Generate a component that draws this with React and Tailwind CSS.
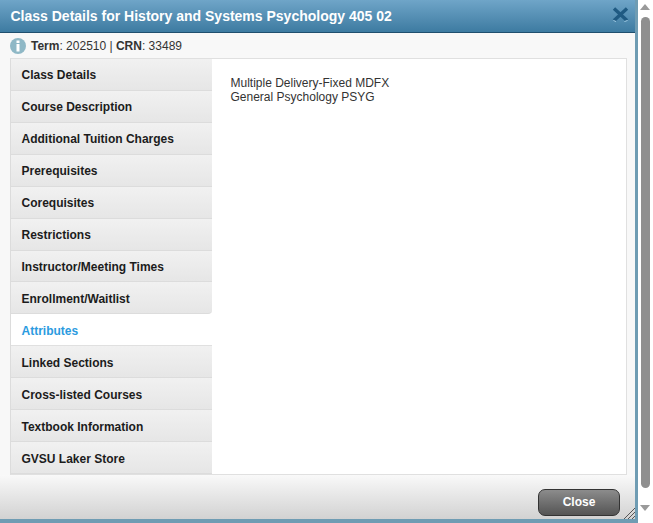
const TABS = [
  'Class Details',
  'Course Description',
  'Additional Tuition Charges',
  'Prerequisites',
  'Corequisites',
  'Restrictions',
  'Instructor/Meeting Times',
  'Enrollment/Waitlist',
  'Attributes',
  'Linked Sections',
  'Cross-listed Courses',
  'Textbook Information',
  'GVSU Laker Store',
];

const ACTIVE = 'Attributes';

const Tab = ({ label, beforeActive }) => {
  if (label === ACTIVE) {
    return (
      <div className="h-[32px] flex items-center pl-[10.5px] pt-[2px] text-[12px] font-bold text-[#2b9be0] bg-white border-b border-[#e0e0e0]">
        {label}
      </div>
    );
  }
  return (
    <div
      className={
        beforeActive
          ? 'h-[32px] flex items-center pl-[10.5px] pt-[2px] text-[12px] font-bold text-[#1c1c1c] bg-gradient-to-b from-[#f1f1f1] to-[#e6e6e6] border-b border-[#dcdcdc] rounded-br-[4px]'
          : 'h-[32px] flex items-center pl-[10.5px] pt-[2px] text-[12px] font-bold text-[#1c1c1c] bg-gradient-to-b from-[#f1f1f1] to-[#e6e6e6] border-b border-[#dcdcdc]'
      }
    >
      {label}
    </div>
  );
};

export default function App() {
  return (
    <div className="flex w-[653px] h-[523px] overflow-hidden bg-white font-['Liberation_Sans',Arial,sans-serif]">
      {/* Dialog */}
      <div className="w-[638px] h-full flex flex-col border-r-[3px] border-b-[4px] border-[#6f9cb3] bg-[#f8f8f8]">
        <div className="relative h-[33px] shrink-0 flex items-center pl-[10.5px] bg-gradient-to-b from-[#6fa5c8] to-[#3d7ba1] border-b border-[#1f4f6e]">
          <span className="text-[14px] font-bold text-white">Class Details for History and Systems Psychology 405 02</span>
          <svg className="absolute right-[6px] top-[7px]" width="17" height="15" viewBox="0 0 17 15">
            <path d="M2 1.5 L15 13.5 M15 1.5 L2 13.5" stroke="#1f5a82" strokeWidth="3.4" fill="none" />
            <path d="M1.5 13.5 L4 14.5 M12.5 14.5 L15.5 13.5" stroke="#a9d3ea" strokeWidth="1" fill="none" />
          </svg>
        </div>

        <div className="h-[25px] shrink-0 flex items-center pl-[10px] gap-[5px] text-[12px] text-[#333]">
          <svg width="16" height="16" viewBox="0 0 16 16">
            <circle cx="8" cy="8" r="8" fill="#8fb8c6" />
            <rect x="6.5" y="2.5" width="3" height="2.5" fill="#fff" />
            <rect x="6.5" y="6" width="3" height="7.5" fill="#fff" />
          </svg>
          <span>
            <b className="font-bold">Term</b>: 202510 | <b className="font-bold">CRN</b>: 33489
          </span>
        </div>

        <div className="ml-[10px] mr-[8px] h-[417px] shrink-0 flex bg-white border-t border-r border-b border-[#e0e0e0] border-l border-l-[#dcdcdc]">
          <div className="w-[201px] shrink-0 flex flex-col">
            {TABS.map((t, i) => (
              <Tab key={t} label={t} beforeActive={TABS[i + 1] === ACTIVE} />
            ))}
          </div>
          <div className="pl-[18.5px] pt-[17px] text-[12px] leading-[14px] text-[#333]">
            <div>Multiple Delivery-Fixed MDFX</div>
            <div>General Psychology PSYG</div>
          </div>
        </div>

        <div className="relative flex-1 flex items-center justify-end pr-[15px] pt-[10px] bg-gradient-to-b from-[#f9f9f9] to-[#d2d2d2]">
          <button className="w-[82px] h-[27px] rounded-[7px] border border-[#333] bg-gradient-to-b from-[#8c8c8c] to-[#555] text-[12px] font-bold text-white">
            Close
          </button>
          <svg className="absolute right-0 bottom-0" width="12" height="12" viewBox="0 0 12 12">
            <path d="M1 12 L12 1 M5 12 L12 5 M9 12 L12 9" stroke="#555" strokeWidth="1" fill="none" />
          </svg>
        </div>
      </div>

      {/* Page scrollbar */}
      <div className="flex-1 flex flex-col items-center pl-[2px] pr-[3px]">
        <svg className="mt-[4px] shrink-0" width="10" height="6" viewBox="0 0 10 6">
          <path d="M5 0 L10 6 L0 6 Z" fill="#9a9a9a" />
        </svg>
        <div className="mt-[7px] w-[9px] h-[471px] rounded-t-[5px] rounded-b-[5px] bg-[#8f8f8f] shrink-0" />
        <svg className="mt-[17px] shrink-0" width="10" height="6" viewBox="0 0 10 6">
          <path d="M0 0 L10 0 L5 6 Z" fill="#9a9a9a" />
        </svg>
      </div>
    </div>
  );
}
